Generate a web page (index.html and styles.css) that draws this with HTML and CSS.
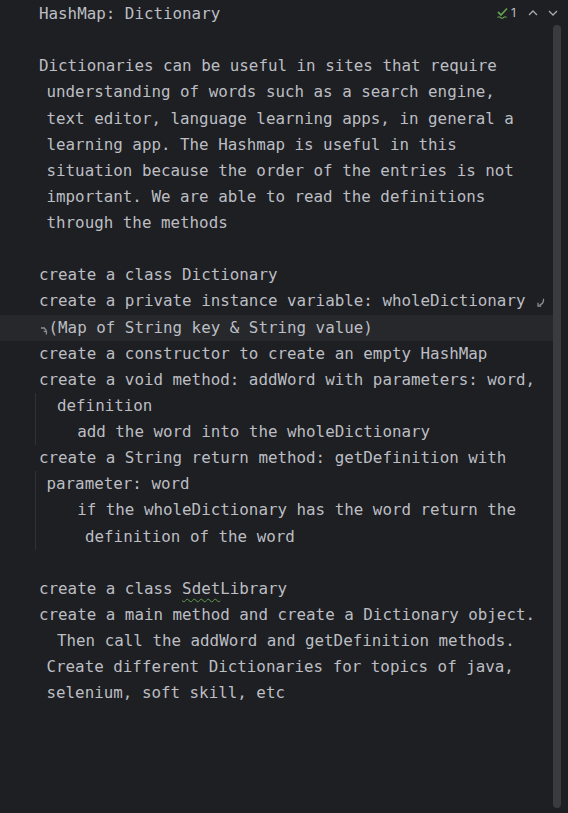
FILE: index.html
```html
<!DOCTYPE html>
<html>
<head>
<meta charset="utf-8">
<link rel="stylesheet" href="styles.css">
</head>
<body>
<div class="ide">
  <div class="editor">
    <div class="line">HashMap: Dictionary</div>
    <div class="line"> </div>
    <div class="line">Dictionaries can be useful in sites that require</div>
    <div class="line c1">understanding of words such as a search engine,</div>
    <div class="line c1">text editor, language learning apps, in general a</div>
    <div class="line c1">learning app. The Hashmap is useful in this</div>
    <div class="line c1">situation because the order of the entries is not</div>
    <div class="line c1">important. We are able to read the definitions</div>
    <div class="line c1">through the methods</div>
    <div class="line"> </div>
    <div class="line">create a class Dictionary</div>
    <div class="line">create a private instance variable: wholeDictionary <svg class="wrap-end" width="8" height="9" viewBox="0 0 8 9"><path d="M6.5 0.8 C6.8 3.5 6 6 2.5 7" fill="none" stroke="#8c8e92" stroke-width="1.3"/><path d="M1 4.8 L1 8 L4.2 8" fill="none" stroke="#8c8e92" stroke-width="1.3"/></svg></div>
    <div class="line current"><svg class="wrap-start" width="8" height="9" viewBox="0 0 8 9"><path d="M1.2 1 L4.5 1 L6.5 3.5" fill="none" stroke="#8c8e92" stroke-width="1.3"/><path d="M4 4.5 L6.8 4.2 L6.5 7.5" fill="none" stroke="#8c8e92" stroke-width="1.3"/></svg>(Map of String key &amp; String value)</div>
    <div class="line">create a constructor to create an empty HashMap</div>
    <div class="line">create a void method: addWord with parameters: word,</div>
    <div class="guide">
      <div class="line c2">definition</div>
      <div class="line">    add the word into the wholeDictionary</div>
    </div>
    <div class="line">create a String return method: getDefinition with</div>
    <div class="guide">
      <div class="line c1">parameter: word</div>
      <div class="line">    if the wholeDictionary has the word return the</div>
      <div class="line c5">definition of the word</div>
    </div>
    <div class="line"> </div>
    <div class="line">create a class <span class="typo">Sdet</span>Library</div>
    <div class="line">create a main method and create a Dictionary object.</div>
    <div class="line c2">Then call the addWord and getDefinition methods.</div>
    <div class="line c1">Create different Dictionaries for topics of java,</div>
    <div class="line c1">selenium, soft skill, etc</div>
  </div>
  <div class="scroll">
    <div class="thumb"></div>
  </div>
  <div class="inspect">
    <svg class="check" width="11" height="12" viewBox="0 0 11 12"><path d="M1 5 L4 8 L10 1.5" fill="none" stroke="#5e9e4e" stroke-width="1.8"/><path d="M0.5 10.5 Q2 9 3.5 10.5 T6.5 10.5 T9.5 10.5" fill="none" stroke="#5e9e4e" stroke-width="1.1"/></svg>
    <span class="count">1</span>
    <svg class="arrow" width="10" height="6" viewBox="0 0 10 6"><path d="M1 5 L5 1 L9 5" fill="none" stroke="#a8aaae" stroke-width="1.3"/></svg>
    <svg class="arrow" width="10" height="6" viewBox="0 0 10 6"><path d="M1 1 L5 5 L9 1" fill="none" stroke="#a8aaae" stroke-width="1.3"/></svg>
  </div>
</div>
</body>
</html>
```
FILE: styles.css
```css
* { box-sizing: border-box; }
html, body {
  margin: 0;
  padding: 0;
  background: #1e1f22;
}
.ide {
  position: relative;
  width: 568px;
  height: 813px;
  display: grid;
  grid-template-columns: 553px 15px;
  background: #1e1f22;
  overflow: hidden;
}
.editor {
  padding-top: 1px;
  font-family: "DejaVu Sans Mono", "Liberation Mono", monospace;
  font-size: 15.85px;
  line-height: 26.13px;
  color: #bcbec4;
}
.line {
  height: 26.13px;
  padding-left: 39px;
  white-space: pre;
}
.c1 { padding-left: 46.5px; }
.c2 { padding-left: 57px; }
.c5 { padding-left: 85px; }
.current {
  background: #26282b;
}
.guide {
  background: linear-gradient(#303134, #303134) no-repeat 35px 0 / 1px 100%;
}
.wrap-end {
  vertical-align: -1px;
  margin-left: 2px;
}
.wrap-start {
  width: 9.54px;
  vertical-align: -3px;
}
.typo {
  text-decoration: underline wavy #5e9e4e;
  text-decoration-thickness: 1px;
  text-underline-offset: 4px;
}
.scroll {
  padding-top: 25px;
  padding-bottom: 5px;
}
.thumb {
  width: 8px;
  height: 783px;
  border-radius: 4px;
  background: #3a3b3e;
}
.inspect {
  position: absolute;
  top: 5px;
  right: 10px;
  display: flex;
  align-items: center;
  font-family: "Inter", "DejaVu Sans", sans-serif;
  font-size: 12px;
  color: #bcbec4;
}
.check { margin-right: 3px; }
.count { margin-right: 12px; }
.arrow { margin-right: 10px; }
.arrow:last-child { margin-right: 0; }
```
